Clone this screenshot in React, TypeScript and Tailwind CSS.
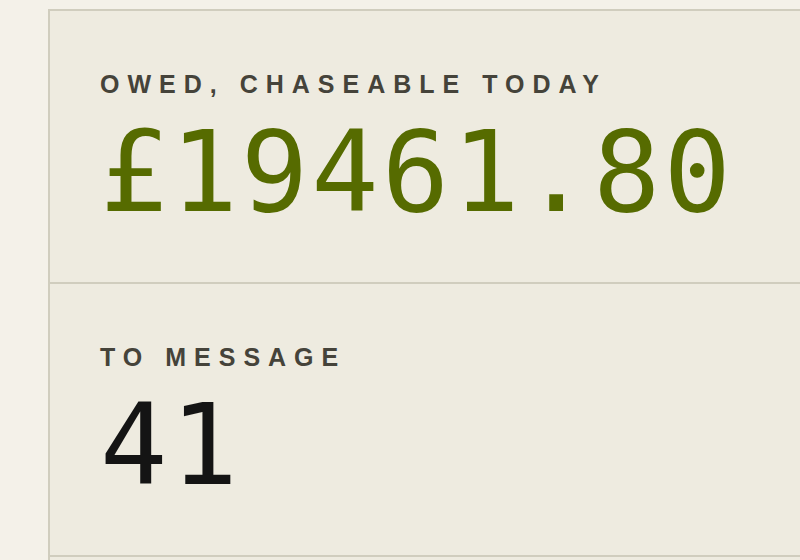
import { memo } from 'react';

const STATS = [
  { label: 'Owed, chaseable today', value: '£19461.80', tone: 'text-[#566b00]' },
  { label: 'To message', value: '41', tone: 'text-[#141414]' },
];

const Stat = memo(({ label, value, tone }: { label: string; value: string; tone: string }) => (
  <div className="h-[273px] border-b-2 border-[#d0cdbe] pl-[50px] pt-[61px]">
    <div className="font-['Liberation_Sans',Arial,sans-serif] text-[25px] font-bold uppercase leading-none tracking-[8px] text-[#45433a]">
      {label}
    </div>
    <div className={`mt-[19px] font-['DejaVu_Sans_Mono',monospace] text-[112px] leading-none tracking-[3px] ${tone}`}>
      {value}
    </div>
  </div>
));

Stat.displayName = 'Stat';

export default function App() {
  return (
    <div className="h-[560px] w-[800px] overflow-hidden bg-[#f4f1e9] pl-[48px] pt-[9px]">
      <div className="h-full border-l-2 border-t-2 border-[#d0cdbe] bg-[#eeebe0]">
        {STATS.map(s => (
          <Stat key={s.label} {...s} />
        ))}
      </div>
    </div>
  );
}
